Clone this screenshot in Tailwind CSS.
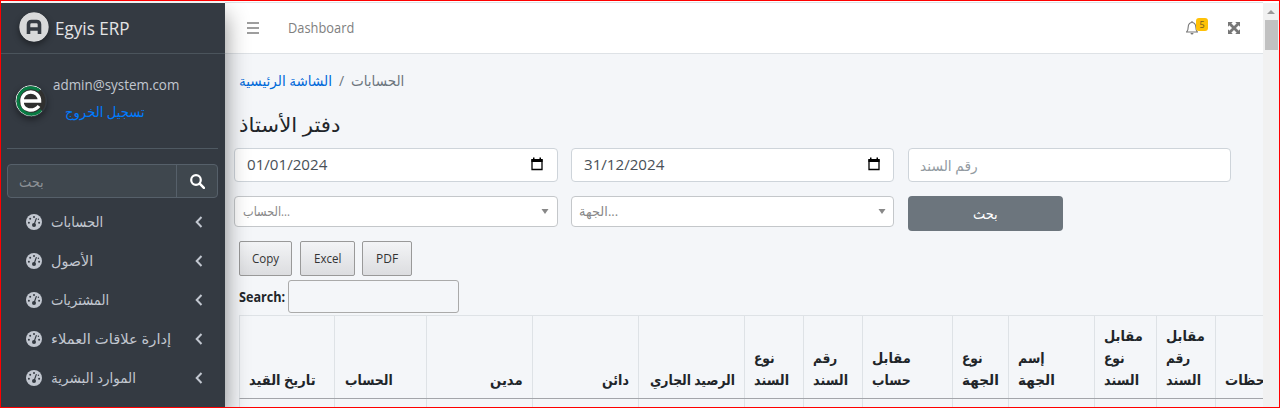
<!DOCTYPE html>
<html lang="ar">
<head>
<meta charset="utf-8">
<title>Egyis ERP</title>
<script src="https://cdn.jsdelivr.net/npm/@tailwindcss/browser@4"></script>
</head>
<body class="h-[408px] w-[1280px] overflow-hidden bg-white font-['Open_Sans','DejaVu_Sans',sans-serif] text-[14px] text-[#212529]">
<svg class="hidden">
  <symbol id="gauge" viewBox="0 0 16 16"><circle cx="8" cy="8" r="8" fill="#c2c7d0"/><g fill="#343a42"><circle cx="8" cy="3" r="1"/><circle cx="4.2" cy="4.7" r="1"/><circle cx="2.9" cy="8.7" r="1"/><circle cx="13.1" cy="8.7" r="1"/><circle cx="12.4" cy="5.2" r=".7"/><circle cx="8" cy="11" r="2"/></g><path d="M8 11 10.3 4.5" stroke="#343a42" stroke-width="1.1" stroke-linecap="round"/></symbol>
  <symbol id="chev" viewBox="0 0 8 12"><path d="M6.5 1 1.7 6l4.8 5" fill="none" stroke="#c2c7d0" stroke-width="2"/></symbol>
  <symbol id="cal" viewBox="0 0 12 14"><path d="M1 3h10v9.5H1z" fill="none" stroke="#000" stroke-width="1.3"/><path d="M.4 2h11.2v3H.4zM2 .5h1.5V3H2zM8.5.5H10V3H8.500z"/></symbol>
</svg>
<div class="flex h-full w-full overflow-hidden border border-[#f00]">
  <aside class="relative z-10 mt-0.5 flex w-56 shrink-0 flex-col bg-[#343a42] text-[#c2c7d0] shadow-[0_12px_22px_rgba(0,0,0,0.45)]">
    <div class="flex h-[51px] shrink-0 items-center border-b border-[#4b545c] pl-[18px]">
      <svg class="-mt-0.5 size-[30px] shrink-0 rounded-full shadow-[0_3px_6px_rgba(0,0,0,0.4)]" viewBox="0 0 30 30"><circle cx="15" cy="15" r="14.700" fill="#d8d9da"/><path d="M9.500 22V12.500q0-3 3-3h5q3 0 3 3V22M9.500 17h11" fill="none" stroke="#343a42" stroke-width="3.600"/></svg>
      <span data-w="75" class="ml-1.5 text-[18px] text-[#e3e4e6]">Egyis ERP</span>
    </div>
    <div class="mr-[7px] ml-1.5 flex h-[95px] shrink-0 border-b border-[#4f5962] pl-2">
      <svg class="mt-[31px] size-8 shrink-0 rounded-full shadow-[0_3px_6px_rgba(0,0,0,0.4)]" viewBox="0 0 32 32"><circle cx="16" cy="16" r="14.500" fill="#30302f"/><path d="M26 4.500A15 15 0 1 0 27 26" fill="none" stroke="#fff" stroke-width="1"/><path d="M24.500 5.500A13.300 13.300 0 1 0 26 25" fill="none" stroke="#087b43" stroke-width="3"/><path d="M6.500 16H24.500C24.500 4 7 4 7 16c0 11 12 11 17 5" fill="none" stroke="#fff" stroke-width="3.500"/></svg>
      <div class="ml-1.5 flex flex-col pt-[18px]">
        <span data-w="126" class="h-6 text-[15px] leading-6">admin@system.com</span>
        <span data-w="80" class="mt-1 ml-3 h-6 text-[14px] leading-6 text-[#007bff]">تسجيل الخروج</span>
      </div>
    </div>
    <div class="mt-[15px] mr-[7px] ml-1.5 flex h-[34px] shrink-0 overflow-hidden rounded border border-[#56606a] bg-[#3f474e]">
      <div class="flex flex-1 items-center pl-[11px] text-[#8c9196]"><span data-w="25">بحث</span></div>
      <div class="flex w-[41px] items-center justify-center border-l border-[#56606a]"><svg class="size-[15px]" viewBox="0 0 15 15"><path d="m9.700 9.700 4.200 4.200" stroke="#fff" stroke-width="2.500" stroke-linecap="round"/><circle cx="6" cy="6" r="4.800" fill="none" stroke="#fff" stroke-width="2.200"/></svg></div>
    </div>
    <nav class="mt-1 flex flex-col">
      <div class="flex h-[39px] items-center pr-[22px] pl-[25px]"><svg class="size-4"><use href="#gauge"/></svg><span data-w="52" class="ml-[9px]">الحسابات</span><svg class="ml-auto h-3 w-2"><use href="#chev"/></svg></div>
      <div class="flex h-[39px] items-center pr-[22px] pl-[25px]"><svg class="size-4"><use href="#gauge"/></svg><span data-w="42" class="ml-[9px]">الأصول</span><svg class="ml-auto h-3 w-2"><use href="#chev"/></svg></div>
      <div class="flex h-[39px] items-center pr-[22px] pl-[25px]"><svg class="size-4"><use href="#gauge"/></svg><span data-w="58" class="ml-[9px]">المشتريات</span><svg class="ml-auto h-3 w-2"><use href="#chev"/></svg></div>
      <div class="flex h-[39px] items-center pr-[22px] pl-[25px]"><svg class="size-4"><use href="#gauge"/></svg><span data-w="120" class="ml-[9px]">إدارة علاقات العملاء</span><svg class="ml-auto h-3 w-2"><use href="#chev"/></svg></div>
      <div class="flex h-[39px] items-center pr-[22px] pl-[25px]"><svg class="size-4"><use href="#gauge"/></svg><span data-w="85" class="ml-[9px]">الموارد البشرية</span><svg class="ml-auto h-3 w-2"><use href="#chev"/></svg></div>
    </nav>
  </aside>

  <div class="mt-px flex w-[1038px] shrink-0 flex-col overflow-hidden border-t border-[#dee2e6] bg-[#f4f6f9]">
    <header class="flex h-[51px] shrink-0 items-center border-b border-[#dee2e6] bg-white pr-[23px] pl-[22px] text-[#808080]">
      <svg class="h-3 w-3" viewBox="0 0 12 12"><path d="M0 1h12M0 6h12M0 11h12" stroke="#7f7f7f" stroke-width="1.600"/></svg>
      <span data-w="66" class="mb-0.5 ml-[29px] text-[14px]">Dashboard</span>
      <div class="mb-1 ml-auto flex items-start">
        <svg class="mt-[3px] h-[14px] w-3" viewBox="0 0 12 14"><path d="M.6 11h10.800Q9.800 9.500 9.800 6C9.800 0 2.200 0 2.200 6q0 3.500-1.600 5ZM6 1.700V0" fill="none" stroke="#777" stroke-width="1.100"/><path d="M4.500 12h3a1.500 1.500 0 0 1-3 0" fill="#777"/></svg>
        <span class="-ml-0.5 h-[13px] w-3 rounded-[3px] bg-[#ffc107] text-center text-[9px] leading-[13px] text-[#6e5a20]">5</span>
      </div>
      <svg class="ml-5 size-3" viewBox="0 0 12 12"><path d="M0 0h4.800L0 4.800zM12 0H7.200L12 4.800zM0 12h4.800L0 7.200zM12 12H7.200L12 7.200z" fill="#777"/><path d="m1.500 1.500 9 9m0-9-9 9" stroke="#777" stroke-width="2.800"/></svg>
    </header>
    <main class="flex flex-col pl-[9px]">
      <div class="mt-[14px] ml-[5px] flex h-6 items-center text-[#6c757d]">
        <span data-w="93" class="text-[#0069d9]">الشاشة الرئيسية</span><span class="mx-[7px]">/</span><span data-w="53">الحسابات</span>
      </div>
      <h1 class="mt-4 ml-[5px] flex h-[34px] items-center text-[20px]"><span data-w="102">دفتر الأستاذ</span></h1>
      <div class="mt-1.5 flex h-[34px] gap-[13px] text-[#495057]">
        <div class="flex w-[324px] items-center justify-between rounded border border-[#ced4da] bg-white pr-[14px] pb-px pl-3"><span data-w="80" class="text-[14px]">01/01/2024</span><svg class="-mt-0.5 h-[14px] w-3"><use href="#cal"/></svg></div>
        <div class="flex w-[323px] items-center justify-between rounded border border-[#ced4da] bg-white pr-[13px] pb-px pl-3"><span data-w="80" class="text-[14px]">31/12/2024</span><svg class="-mt-0.5 h-[14px] w-3"><use href="#cal"/></svg></div>
        <div class="ml-px flex w-[323px] items-center rounded border border-[#ced4da] bg-white pl-[11px] text-[#939ba2]"><span data-w="58">رقم السند</span></div>
      </div>
      <div class="mt-[14px] flex items-start gap-[13px] text-[13px] text-[#888]">
        <div class="flex h-[31px] w-[324px] items-center justify-between rounded border border-[#c4c7ca] bg-white pr-2 pl-2"><span data-w="47" dir="ltr">الحساب&lrm;...</span><svg class="h-[5px] w-2" viewBox="0 0 8 5"><path d="M.5 0h7L4 5z" fill="#888"/></svg></div>
        <div class="flex h-[31px] w-[323px] items-center justify-between rounded border border-[#c4c7ca] bg-white pr-[7px] pl-[7px]"><span data-w="39" dir="ltr">الجهة&lrm;...</span><svg class="h-[5px] w-2" viewBox="0 0 8 5"><path d="M.5 0h7L4 5z" fill="#888"/></svg></div>
        <div class="ml-px flex h-[35px] w-[155px] items-center justify-center rounded bg-[#6c757d] text-[14px] text-white"><span data-w="25">بحث</span></div>
      </div>
      <div class="mt-2.5 ml-[5px] flex h-[35px] text-[12px] text-[#333]">
        <div class="flex w-[53px] items-center justify-center rounded-xs border border-[#999] bg-linear-to-b from-[#f3f4f6] to-[#dcdde0]"><span data-w="27">Copy</span></div>
        <div class="ml-2 flex w-[55px] items-center justify-center rounded-xs border border-[#999] bg-linear-to-b from-[#f3f4f6] to-[#dcdde0]"><span data-w="27">Excel</span></div>
        <div class="ml-[7px] flex w-[50px] items-center justify-center rounded-xs border border-[#999] bg-linear-to-b from-[#f3f4f6] to-[#dcdde0]"><span data-w="22">PDF</span></div>
      </div>
      <div class="mt-1 ml-[5px] flex h-[33px] items-center text-[14px] font-bold"><span data-w="46">Search:</span><div class="ml-[3px] h-[33px] w-[171px] rounded-[3px] border border-[#aaa]"></div></div>
      <div class="mt-0.5 ml-[5px] grid h-[84px] w-[1100px] shrink-0 grid-cols-[95px_92px_106px_106px_106px_59px_59px_90px_56px_86px_62px_59px_124px] border-t border-b border-l border-t-[#dee2e6] border-b-[#a3a5aa] border-l-[#dee2e6] font-bold leading-[22px] *:flex *:flex-col *:justify-end *:border-r *:border-[#dee2e6] *:px-[9px] *:pb-[7px]">
        <div><span data-w="67">تاريخ القيد</span></div>
        <div><span data-w="48" class="ml-px">الحساب</span></div>
        <div class="items-end"><span data-w="33">مدين</span></div>
        <div class="items-end"><span data-w="27">دائن</span></div>
        <div class="items-end"><span data-w="85">الرصيد الجاري</span></div>
        <div><span data-w="21">نوع</span><span data-w="35">السند</span></div>
        <div><span data-w="24">رقم</span><span data-w="35">السند</span></div>
        <div><span data-w="39">مقابل</span><span data-w="39">حساب</span></div>
        <div><span data-w="21">نوع</span><span data-w="37">الجهة</span></div>
        <div><span data-w="27">إسم</span><span data-w="37">الجهة</span></div>
        <div><span data-w="39">مقابل</span><span data-w="21">نوع</span><span data-w="35">السند</span></div>
        <div><span data-w="39">مقابل</span><span data-w="24">رقم</span><span data-w="35">السند</span></div>
        <div><span data-w="58">ملاحظات</span></div>
      </div>
      <div class="ml-[5px] grid h-[9px] w-[1100px] grid-cols-[95px_92px_106px_106px_106px_59px_59px_90px_56px_86px_62px_59px_124px] border-l border-[#dee2e6] *:border-r *:border-[#dee2e6]"><i></i><i></i><i></i><i></i><i></i><i></i><i></i><i></i><i></i><i></i><i></i><i></i><i></i></div>
    </main>
  </div>
  <div class="mt-0.5 flex w-4 shrink-0 flex-col items-center bg-[#f1f1f1]"><svg class="mt-[7px] h-1 w-2" viewBox="0 0 8 4"><path d="M0 4 4 0l4 4z" fill="#999"/></svg><div class="mt-1.5 ml-px h-[30px] w-[13px] bg-[#c1c1c1]"></div></div>
</div>
<script>
function fit(inner) {
  var w = inner.parentNode.dataset.w;
  if (inner.offsetWidth) inner.style.transform = 'scaleX(' + w / inner.offsetWidth + ')';
}
var watcher = new ResizeObserver(function (entries) {
  entries.forEach(function (e) { fit(e.target); });
});
document.querySelectorAll('[data-w]').forEach(function (el) {
  var inner = document.createElement('span');
  while (el.firstChild) inner.appendChild(el.firstChild);
  inner.className = 'inline-block whitespace-nowrap origin-left';
  el.appendChild(inner);
  el.classList.add('block', 'shrink-0', 'whitespace-nowrap');
  el.style.width = el.dataset.w + 'px';
  fit(inner);
  watcher.observe(inner);
});
window.addEventListener('load', function () {
  document.querySelectorAll('[data-w] > span').forEach(fit);
});
</script>
</body>
</html>
